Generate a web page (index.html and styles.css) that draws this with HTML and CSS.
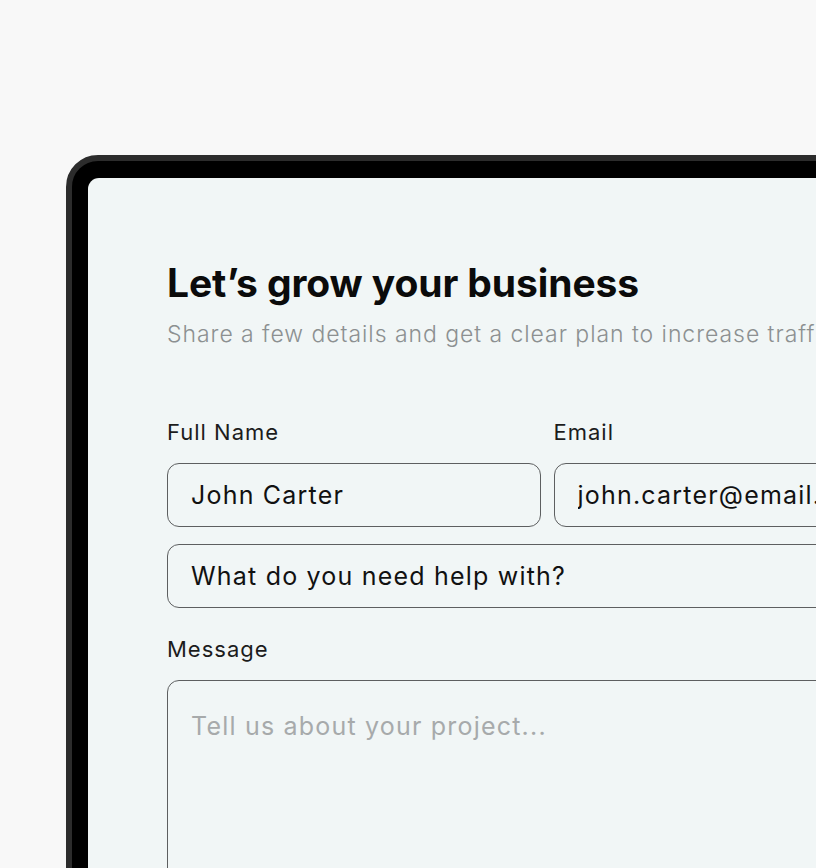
FILE: index.html
```html
<!DOCTYPE html>
<html lang="en">
<head>
<meta charset="UTF-8">
<meta name="viewport" content="width=device-width, initial-scale=1.0">
<title>Contact</title>
<link rel="stylesheet" href="styles.css">
</head>
<body>

<div class="tablet">
  <div class="screen">
    <h1 class="title">Let’s grow your business</h1>
    <p class="subtitle">Share a few details and get a clear plan to increase traffic and sales.</p>

    <form class="form">
      <div class="row">
        <div class="field">
          <label for="name">Full Name</label>
          <input type="text" id="name" value="John Carter">
        </div>
        <div class="field">
          <label for="email">Email</label>
          <input type="email" id="email" value="john.carter@email.com">
        </div>
      </div>

      <select class="service">
        <option>What do you need help with?</option>
        <option>SEO</option>
        <option>Paid ads</option>
        <option>Web design</option>
      </select>

      <div class="field message">
        <label for="message">Message</label>
        <textarea id="message" placeholder="Tell us about your project..."></textarea>
      </div>
    </form>
  </div>
</div>

</body>
</html>
```

FILE: styles.css
```css
body {
  margin: 0;
  background-color: #f8f8f8;
  font-family: Inter, "Liberation Sans", sans-serif;
  overflow: hidden;
  height: 868px;
}

.tablet {
  margin: 155px 0 0 66px;
  width: 900px;
  height: 900px;
  background-color: #000;
  border: 6px solid #2c2c2c;
  border-radius: 32px;
  padding: 17px 0 0 16px;
}

.screen {
  background-color: #f1f6f6;
  border-radius: 11px;
  height: 100%;
  padding: 81px 0 0 79px;
  box-sizing: border-box;
}

.title {
  margin: 0;
  font-size: 39px;
  font-weight: 700;
  letter-spacing: -0.1px;
  color: #0b0b0b;
}

.subtitle {
  margin: 14px 0 0;
  font-size: 23px;
  font-weight: 300;
  letter-spacing: 0.95px;
  color: #8c9091;
  white-space: nowrap;
}

.form {
  margin-top: 71px;
  width: 760px;
  display: flex;
  flex-direction: column;
  gap: 17px;
}

.row {
  display: flex;
  gap: 13px;
}

.field {
  flex: 1;
  display: flex;
  flex-direction: column;
  gap: 18px;
}

.field.message {
  margin-top: 11px;
}

.field label {
  font-size: 22px;
  letter-spacing: 1px;
  color: #1c1c1c;
}

.field input,
.service,
.field textarea {
  font-family: inherit;
  font-size: 25px;
  letter-spacing: 1.2px;
  color: #111;
  background-color: transparent;
  border: 1px solid #5d5f60;
  border-radius: 12px;
  height: 64px;
  padding: 0 23px;
  box-sizing: border-box;
  width: 100%;
  outline: none;
}

.service {
  appearance: none;
}

.field textarea {
  height: 220px;
  padding: 30px 23px;
  resize: none;
}

.field textarea::placeholder {
  color: #a7aaab;
}
```
